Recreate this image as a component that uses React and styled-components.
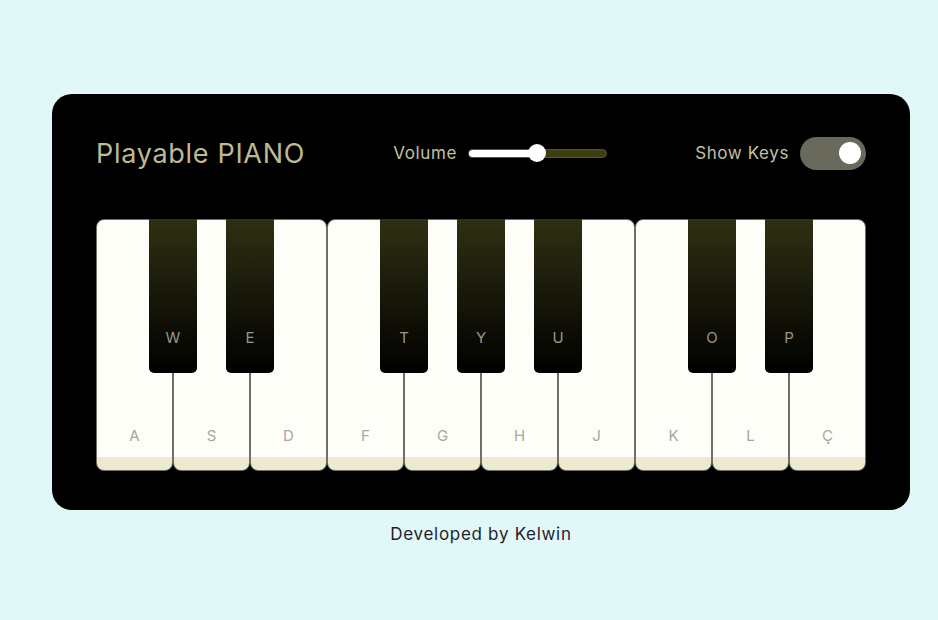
import styled, { createGlobalStyle } from 'styled-components';

const GlobalStyle = createGlobalStyle`
  html, body {
    margin: 0;
    padding: 0;
  }
  body {
    background: #e2f7f7;
    font-family: Inter, "Open Sans", sans-serif;
    min-height: 620px;
  }
`;

// 흰 건반과 검은 건반 순서
const KEYS = [
  { type: 'white', key: 'A' },
  { type: 'black', key: 'W' },
  { type: 'white', key: 'S' },
  { type: 'black', key: 'E' },
  { type: 'white', key: 'D' },
  { type: 'white', key: 'F' },
  { type: 'black', key: 'T' },
  { type: 'white', key: 'G' },
  { type: 'black', key: 'Y' },
  { type: 'white', key: 'H' },
  { type: 'black', key: 'U' },
  { type: 'white', key: 'J' },
  { type: 'white', key: 'K' },
  { type: 'black', key: 'O' },
  { type: 'white', key: 'L' },
  { type: 'black', key: 'P' },
  { type: 'white', key: 'Ç' },
];

const App = () => {
  return (
    <>
      <GlobalStyle />
      <Page>
        <Wrapper>
          <Header>
            <Title>Playable PIANO</Title>
            <Control>
              <span>Volume</span>
              <Slider>
                <SliderFill />
                <SliderThumb />
              </Slider>
            </Control>
            <Control>
              <span>Show Keys</span>
              <Toggle>
                <ToggleKnob />
              </Toggle>
            </Control>
          </Header>
          <PianoKeys>
            {KEYS.map((k) =>
              k.type === 'white' ? (
                <WhiteKey key={k.key}>
                  <KeyLabel>{k.key}</KeyLabel>
                </WhiteKey>
              ) : (
                <BlackKey key={k.key}>
                  <KeyLabel>{k.key}</KeyLabel>
                </BlackKey>
              )
            )}
          </PianoKeys>
        </Wrapper>
        <Footer>Developed by Kelwin</Footer>
      </Page>
    </>
  );
};

export default App;

const Page = styled.div`
  display: flex;
  flex-direction: column;
  align-items: center;

  width: 858px;
  margin-left: 52px;
  padding-top: 94px;
`;

const Wrapper = styled.div`
  background: #000;
  border-radius: 20px;

  width: 100%;
  box-sizing: border-box;
  padding: 37px 44px 39px;
`;

const Header = styled.header`
  display: flex;
  align-items: center;
  justify-content: space-between;

  height: 44px;
  margin-bottom: 44px;

  color: #c2c0a2;
`;

const Title = styled.h2`
  margin: 0;

  font-size: 27px;
  font-weight: 400;
  letter-spacing: 0.7px;
  color: #bdba93;
`;

const Control = styled.div`
  display: flex;
  align-items: center;
  gap: 11px;

  font-size: 17px;
  letter-spacing: 0.6px;
`;

const Slider = styled.div`
  position: relative;

  width: 139px;
  height: 9px;

  border: 1px solid #55553a;
  border-radius: 6px;
  background: #3e3e12;
  box-sizing: border-box;
`;

const SliderFill = styled.div`
  width: 50%;
  height: 100%;

  border-radius: 6px;
  background: #fff;
`;

const SliderThumb = styled.div`
  position: absolute;
  left: 59px;
  top: 50%;

  width: 18px;
  height: 18px;
  transform: translateY(-50%);

  border-radius: 50%;
  background: #fff;
`;

const Toggle = styled.div`
  display: flex;
  align-items: center;
  justify-content: flex-end;

  width: 66px;
  height: 33px;
  padding: 0 5px;
  box-sizing: border-box;

  border-radius: 17px;
  background: #6a6a5c;
`;

const ToggleKnob = styled.div`
  width: 22px;
  height: 22px;

  border-radius: 50%;
  background: #fff;
`;

const PianoKeys = styled.ul`
  display: flex;

  margin: 0;
  padding: 0;
  list-style: none;
`;

const KeyLabel = styled.span`
  position: absolute;
  left: 0;
  right: 0;
  bottom: 25px;

  font-size: 15px;
  text-align: center;
  color: #a8a6a0;
`;

const WhiteKey = styled.li`
  position: relative;

  width: 77px;
  height: 252px;
  box-sizing: border-box;

  border: 1px solid #6f6f64;
  border-radius: 8px;
  background: linear-gradient(#fefef8 95%, #ecebd2 95%);
`;

const BlackKey = styled.li`
  position: relative;
  z-index: 2;

  width: 48px;
  height: 154px;
  margin: 0 -24px;

  border-radius: 0 0 5px 5px;
  background: linear-gradient(#303014, #000);

  ${KeyLabel} {
    bottom: 26px;
    color: #9a9888;
  }
`;

const Footer = styled.p`
  margin: 14px 0 0;

  font-size: 17px;
  letter-spacing: 0.7px;
  color: #1e1e2a;
`;
